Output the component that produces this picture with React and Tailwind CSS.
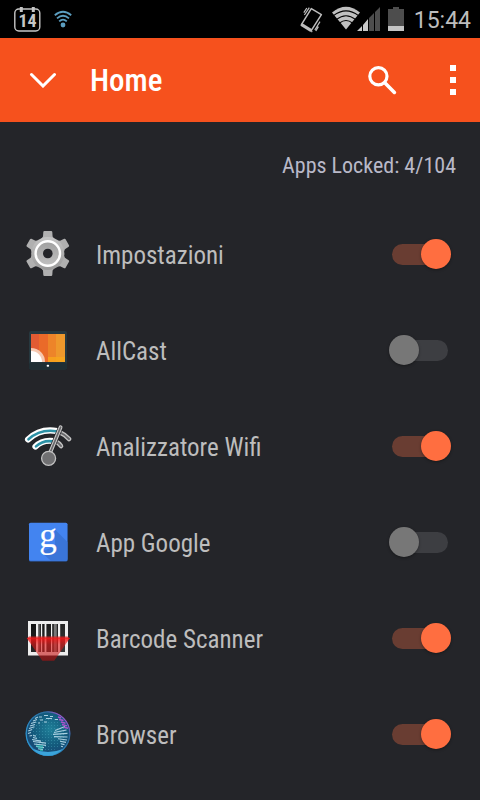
import React, { useState } from "react";

const totalApps = 104;

const initialApps = [
  { id: "settings", name: "Impostazioni", icon: SettingsIcon, locked: true },
  { id: "allcast", name: "AllCast", icon: CastIcon, locked: false },
  { id: "wifi", name: "Analizzatore Wifi", icon: AnalyzerIcon, locked: true },
  { id: "google", name: "App Google", icon: GoogleIcon, locked: false },
  { id: "barcode", name: "Barcode Scanner", icon: BarcodeIcon, locked: true },
  { id: "browser", name: "Browser", icon: BrowserIcon, locked: true },
];

function SettingsIcon() {
  return (
    <svg viewBox="0 0 48 48" className="size-12">
      <defs>
        <linearGradient id="gear" x1="0" y1="0" x2="0" y2="1">
          <stop offset="0" stopColor="#c4c4c4" />
          <stop offset="1" stopColor="#9a9a9a" />
        </linearGradient>
        <linearGradient id="gearHub" x1="0" y1="0" x2="0" y2="1">
          <stop offset="0" stopColor="#a0a0a0" />
          <stop offset="1" stopColor="#c0c0c0" />
        </linearGradient>
      </defs>
      <g fill="#b0b0b0">
        {[0, 60, 120, 180, 240, 300].map((angle) => (
          <path
            key={angle}
            d="M15.5 11 19 6.5 19.3 2Q19.4 1 20.4 1H27.2Q28.2 1 28.3 2L28.6 6.5 32.1 11Z"
            transform={`rotate(${angle} 23.8 23.5)`}
          />
        ))}
      </g>
      <circle cx="23.8" cy="23.5" r="16.6" fill="url(#gear)" />
      <circle
        cx="23.8"
        cy="23.5"
        r="12.2"
        fill="url(#gearHub)"
        stroke="#fff"
        strokeWidth="2.4"
      />
      <circle cx="23.8" cy="23.5" r="4.8" fill="#242529" />
    </svg>
  );
}

function CastIcon() {
  return (
    <svg viewBox="0 0 48 48" className="size-12">
      <rect x="5" y="5" width="38" height="38.5" rx="2" fill="#26383f" />
      <rect x="5" y="36.5" width="38" height="7" rx="2" fill="#1f2e34" />
      <rect x="7" y="8" width="34" height="28" fill="#e15b33" />
      <rect x="15" y="8" width="26" height="28" fill="#ea6a29" />
      <rect x="24" y="8" width="17" height="28" fill="#ed8429" />
      <rect x="32" y="8" width="9" height="28" fill="#ee982c" />
      <path d="M24 31H41V36H24Z" fill="#f8a71c" opacity=".8" />
      <path d="M7 22A14 14 0 0 1 21 36H7Z" fill="#f6c8b0" />
      <path d="M7 25A11 11 0 0 1 18 36H7Z" fill="#fff" />
      <rect x="22.7" y="38.8" width="2.4" height="2" rx=".8" fill="#fff" />
    </svg>
  );
}

function AnalyzerIcon() {
  return (
    <svg viewBox="0 0 48 48" className="size-12" fill="none" strokeLinecap="round">
      <path d="M35 9.8Q41 12.4 45 17" stroke="#c4c4c4" strokeWidth="4.6" />
      <path d="M35 9.8Q41 12.4 45 17" stroke="#69696c" strokeWidth="2" />
      <path d="M32 19.6Q35 21 37 24" stroke="#c4c4c4" strokeWidth="4.6" />
      <path d="M32 19.6Q35 21 37 24" stroke="#69696c" strokeWidth="2" />
      <path d="M4 17.5Q16 6 33 9" stroke="#fff" strokeWidth="6" />
      <path d="M4.5 17.3Q16 6.8 32 9.2" stroke="#2c91a6" strokeWidth="2.6" />
      <path d="M11.4 24.6Q18.5 17.2 30 19" stroke="#fff" strokeWidth="6" />
      <path d="M12 24.4Q19 18 28.5 19.4" stroke="#2c91a6" strokeWidth="2.6" />
      <path d="M36.6 5.2 26 31" stroke="#242529" strokeWidth="5.2" />
      <path d="M36.6 5.2 26 31" stroke="#c9c9c9" strokeWidth="3.8" />
      <path d="M36.6 5.2 26 31" stroke="#67676a" strokeWidth="1.7" />
      <circle cx="24.6" cy="36.3" r="7" fill="#707072" stroke="#c2c2c2" strokeWidth="1.3" />
    </svg>
  );
}

function GoogleIcon() {
  return (
    <svg viewBox="0 0 48 48" className="size-12 overflow-visible">
      <rect x="5" y="5" width="38.4" height="38.6" rx="1.6" fill="#2f62b8" />
      <rect x="5" y="4.7" width="38.4" height="38" rx="1.6" fill="#4384f0" />
      <path d="M31 11.5 43.4 24V42.7H27L17 34 31 28Z" fill="#3a75d8" />
      <text
        x="24"
        y="29"
        textAnchor="middle"
        fill="#fff"
        stroke="#fff"
        strokeWidth=".2"
        className="font-['Liberation_Serif',serif] text-[35px] leading-none"
      >
        g
      </text>
    </svg>
  );
}

function BarcodeIcon() {
  return (
    <svg viewBox="0 0 48 48" className="size-12">
      <defs>
        <linearGradient id="laser" x1="0" y1="0" x2="0" y2="1">
          <stop offset="0" stopColor="#ff1414" stopOpacity=".85" />
          <stop offset=".3" stopColor="#e81818" stopOpacity=".6" />
          <stop offset="1" stopColor="#b01010" stopOpacity=".6" />
        </linearGradient>
        <linearGradient id="bars" x1="0" y1="0" x2="1" y2="1">
          <stop offset="0" stopColor="#111" />
          <stop offset="1" stopColor="#3a3a3a" />
        </linearGradient>
      </defs>
      <rect x="4" y="7" width="40" height="34.5" fill="#ededed" />
      <rect x="7" y="10" width="34" height="28" fill="url(#bars)" />
      <path
        d="M12 10h2.4v28H12ZM17 10h1.2v28H17ZM20.6 10h1.8v28h-1.8ZM27 10h1.2v28H27ZM34 10h2.2v28H34Z"
        fill="#f0f0f0"
      />
      <path d="M15.4 10h.8v28h-.8ZM29.8 10h3v28h-3Z" fill="#777" />
      <path d="M2.7 24H46L30.2 46.7H18.3Z" fill="url(#laser)" />
      <path d="M5 22.4H43.5L46 24.5H2.7Z" fill="#e81c1c" opacity=".75" />
    </svg>
  );
}

function BrowserIcon() {
  return (
    <svg viewBox="0 0 48 48" className="size-12">
      <defs>
        <radialGradient id="globe" cx=".55" cy=".4" r=".62">
          <stop offset="0" stopColor="#1f7f98" />
          <stop offset=".6" stopColor="#135a7c" />
          <stop offset=".88" stopColor="#174a75" />
          <stop offset="1" stopColor="#2b7fb4" />
        </radialGradient>
        <linearGradient id="globeRim" x1="0" y1="1" x2="1" y2="0">
          <stop offset=".2" stopColor="#2f95cf" />
          <stop offset=".72" stopColor="#2c6d9c" />
          <stop offset=".88" stopColor="#b14fd0" />
        </linearGradient>
        <pattern id="globeDots" width="3" height="3" patternUnits="userSpaceOnUse">
          <rect width="1" height="1" fill="#4ba7bd" opacity=".45" />
        </pattern>
      </defs>
      <circle cx="24" cy="23.6" r="22.4" fill="url(#globe)" />
      <circle cx="24" cy="24" r="17" fill="url(#globeDots)" />
      <circle cx="24" cy="23.6" r="21.8" fill="none" stroke="url(#globeRim)" strokeWidth="1.2" />
      <path d="M9 39Q24 45 39 39Q32 45.8 24 45.6 15 45.6 9 39Z" fill="#3ba4da" />
      <g fill="none" stroke="#a9cfe0" strokeWidth="1.1">
        <path d="M11 8.5l3-1.5M9 11l4-1.5M7 13.5l5-1.5M6 16l5-1.6M5 18.5l5.5-1.8M4.2 21l4-1.6M4 23.5l3-1M5.5 26l2.5-.5" />
        <path d="M15 7h3M20 5.5h4M26 6.5h3M16 10h3M22 8.5h6M31 9.5h3M14 13h2M20 12h3" />
        <path d="M9 27.5l4 1M8 29.5l9 1.6M9 31.5l13 1.6M10 34l12 1.4M12 36.4l8 1.2M14 38.8l5 .8M9 25.5l3 .6" />
        <path d="M31 20.5l10-4M30 22.5l12.5-2.5M29 24.4l14.5-1M30 26.6l13.5.4M34 28.8l9 1.2M36 31.2l6 1.2M37 33.8l3.5.8M37 36.2l2 .5" />
      </g>
      <g fill="none" stroke="#ad52ce" strokeWidth="1.5">
        <path d="M34 7l3 1M35 9.5l4.5 1M37 12l4.5 1.2M38 14.5l5 1.4M40 17.3l4 1" />
      </g>
      <path d="M12 36h7M14 38h5M16 40.2h3" stroke="#27c2b5" strokeWidth="1" />
    </svg>
  );
}

function StatusBar() {
  return (
    <div className="flex h-[38px] items-center justify-between bg-black pl-3 pr-[9px]">
      <div className="flex items-center gap-3">
        <svg viewBox="0 0 30 28" className="h-7 w-[30px]">
          <rect
            x="2.8"
            y="4"
            width="25"
            height="22"
            rx="4"
            fill="none"
            stroke="#c6c6c6"
            strokeWidth="1.4"
          />
          <path d="M9.3 2V7M21.3 2V7" stroke="#c6c6c6" strokeWidth="3" />
          <text
            x="15.6"
            y="21.6"
            textAnchor="middle"
            fill="#c6c6c6"
            className="font-['Roboto_Condensed','Roboto',sans-serif] text-[18px] leading-none font-bold"
          >
            14
          </text>
        </svg>
        <svg
          viewBox="0 0 18 18"
          className="size-[18px]"
          fill="none"
          stroke="#5b9dbf"
          strokeWidth="1.8"
        >
          <path d="M.8 5.2Q9-1.8 17.2 5.2M3 8.4Q9 3 15 8.4M5.2 11.4Q9 7.8 12.8 11.4" />
          <circle cx="9" cy="15" r="2.4" fill="#5b9dbf" stroke="none" />
        </svg>
      </div>
      <div className="flex items-center">
        <svg viewBox="0 0 24 28" className="h-7 w-6" fill="none" stroke="#bdbdbd">
          <path d="M11.3 3.6 21.4 9.6 11.2 25.6 1.4 19.6Z" strokeWidth="1.5" strokeLinejoin="round" />
          <path d="M1.2 19.4 11.3 25.6" strokeWidth="3" />
          <path d="M9.3 2.6 4.4 10M6.8 3 3.8 7.6M20 16.6 14.8 25M18.4 21.6 15.8 26M12.2 26.2 11.4 27.2" strokeWidth="1.2" />
        </svg>
        <svg viewBox="0 0 56 26" className="ml-2 h-[26px] w-14" fill="none">
          <path d="M0 6.4Q14-5 28 6.4L14 23.5Z" fill="#c0c0c0" />
          <path
            d="M1.5 9.6Q14 .2 26.5 9.6M4.5 13.4Q14 6 23.5 13.4M7.5 17Q14 12 20.5 17"
            stroke="#000"
            strokeWidth="1.1"
          />
          <path d="M25 25 30 20V25ZM31 19 36 13V25H31Z" fill="#c9c9c9" />
          <path d="M37 12 42 7V25H37ZM43 6 48 1V25H43Z" fill="#4d4d4d" />
        </svg>
        <svg viewBox="0 0 16 26" className="h-[26px] w-4">
          <path d="M0 3H5V1H11V3H16V25H0Z" fill="#4d4d4d" />
          <path d="M0 20H16V25H0Z" fill="#c4c4c4" />
        </svg>
        <span className="ml-[10px] pt-[3px] font-['Roboto',sans-serif] text-[23px] leading-[35px] text-[#bdbdbd]">
          15:44
        </span>
      </div>
    </div>
  );
}

function AppBar() {
  return (
    <header className="flex h-[84px] items-center bg-[#f6511d] pl-6 pr-2 text-white">
      <button type="button" aria-label="Expand" className="flex size-[38px] items-center justify-center">
        <svg viewBox="0 0 28 16" className="h-4 w-7" fill="none" stroke="currentColor">
          <path d="M2.5 2.5 14 14 25.5 2.5" strokeWidth="3" strokeLinecap="round" />
        </svg>
      </button>
      <h1 className="ml-7 flex-1 pt-[2px] text-[31px] leading-10 font-medium">Home</h1>
      <button type="button" aria-label="Search" className="flex size-10 items-center justify-center">
        <svg viewBox="0 0 30 30" className="size-[30px]" fill="none" stroke="currentColor">
          <circle cx="11.4" cy="11.2" r="8.6" strokeWidth="3.2" />
          <path d="M17.8 17.8 27.4 27.4" strokeWidth="3.6" strokeLinecap="round" />
        </svg>
      </button>
      <button type="button" aria-label="More options" className="ml-8 flex h-10 w-[38px] items-center justify-center">
        <svg viewBox="0 0 6 30" className="h-[30px] w-[6px]" fill="currentColor">
          <path d="M0 0H6V6H0ZM0 12H6V18H0ZM0 24H6V30H0Z" />
        </svg>
      </button>
    </header>
  );
}

function Switch({ id, checked, onChange }) {
  return (
    <input
      id={id}
      type="checkbox"
      role="switch"
      checked={checked}
      onChange={onChange}
      className="relative h-[30px] w-[62px] shrink-0 cursor-pointer appearance-none before:absolute before:inset-x-[3px] before:top-[5px] before:h-[21px] before:rounded-full before:bg-[#3d3e42] before:content-[''] after:absolute after:top-0 after:left-0 after:size-[30px] after:rounded-full after:bg-[#777777] after:shadow-[0_1px_3px_rgba(0,0,0,0.35)] after:content-[''] checked:before:bg-[#693d32] checked:after:left-8 checked:after:bg-[#ff6e40]"
    />
  );
}

export default function App() {
  const [apps, setApps] = useState(initialApps);

  const lockedCount = apps.filter((app) => app.locked).length;

  const toggleApp = (id) => {
    setApps((prev) =>
      prev.map((app) => (app.id === id ? { ...app, locked: !app.locked } : app)),
    );
  };

  return (
    <div className="min-h-screen bg-[#242529] font-['Roboto_Condensed','Liberation_Sans_Narrow','Roboto',sans-serif]">
      <StatusBar />
      <AppBar />
      <main>
        <p className="flex h-[84px] items-center justify-end pt-[2px] pr-6 text-[22px] text-[#b9b9c8]">
          Apps Locked: {lockedCount}/{totalApps}
        </p>
        <ul>
          {apps.map((app) => {
            const Icon = app.icon;
            return (
              <li key={app.id} className="flex h-24 items-center pb-px pl-6 pr-[29px]">
                <Icon />
                <label
                  htmlFor={app.id}
                  className="ml-6 flex-1 pt-1 text-[25px] leading-8 text-[#bdbdbd]"
                >
                  {app.name}
                </label>
                <Switch
                  id={app.id}
                  checked={app.locked}
                  onChange={() => toggleApp(app.id)}
                />
              </li>
            );
          })}
        </ul>
      </main>
    </div>
  );
}
